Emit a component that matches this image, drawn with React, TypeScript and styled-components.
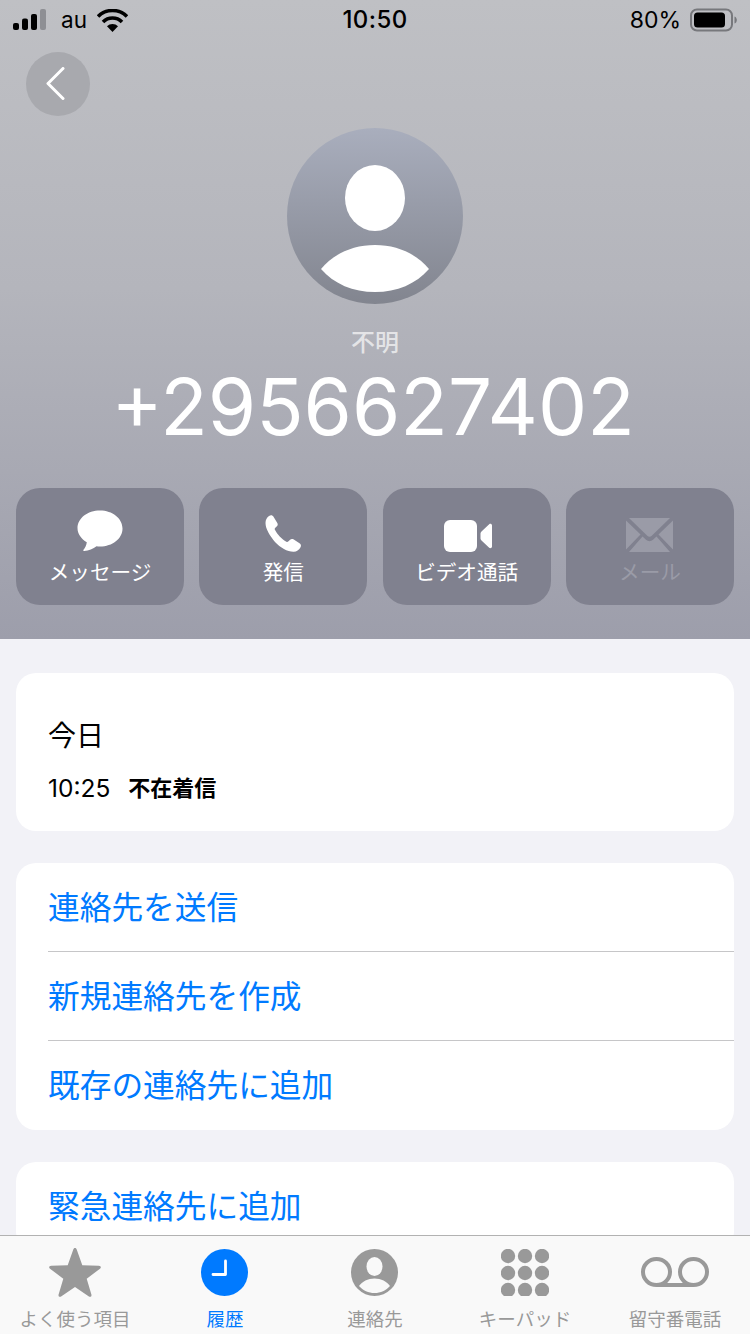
import styled, { createGlobalStyle } from 'styled-components';

const GlobalStyle = createGlobalStyle`
  html, body {
    margin: 0;
    padding: 0;
    background: #f2f2f7;
  }
  * {
    box-sizing: border-box;
  }
`;

const FONT = `Inter, "Noto Sans CJK JP", sans-serif`;

const Screen = styled.div`
  width: 750px;
  height: 1334px;
  display: flex;
  flex-direction: column;
  overflow: hidden;
  font-family: ${FONT};
  background: #f2f2f7;
`;

const Scroller = styled.div`
  flex: 1;
  min-height: 0;
  overflow: hidden;
`;

const Header = styled.header`
  height: 639px;
  padding: 0 16px;
  background: linear-gradient(180deg, #bfc0c4 0%, #b4b5bc 45%, #9d9eab 100%);
`;

const StatusBar = styled.div`
  display: grid;
  grid-template-columns: 1fr auto 1fr;
  align-items: center;
  height: 40px;
  margin: 0 -3px;
  color: #000;
`;

const StatusLeft = styled.div`
  display: flex;
  align-items: center;
`;

const Carrier = styled.span`
  margin: 0 10px 0 15px;
  font-size: 22.5px;
  line-height: 40px;
`;

const Clock = styled.span`
  font-size: 24px;
  font-weight: 500;
  line-height: 40px;
  letter-spacing: 0.4px;
`;

const StatusRight = styled.div`
  display: flex;
  align-items: center;
  justify-content: flex-end;
  gap: 9px;
`;

const Percent = styled.span`
  font-size: 23px;
  line-height: 40px;
`;

const BackRow = styled.div`
  padding: 12px 0 0 10px;
`;

const BackButton = styled.div`
  width: 64px;
  height: 64px;
  border-radius: 50%;
  background: #a8a9ae;
  display: flex;
  align-items: center;
  justify-content: center;
  padding: 0 6px 2px 0;
`;

const Identity = styled.div`
  display: flex;
  flex-direction: column;
  align-items: center;
  margin-top: 12px;
`;

const Avatar = styled.div`
  width: 176px;
  height: 176px;
  border-radius: 50%;
  overflow: hidden;
  background: linear-gradient(180deg, #a9aebd 0%, #82858f 100%);
`;

const Subtitle = styled.div`
  margin-top: 23px;
  font-size: 24px;
  font-weight: 500;
  line-height: 32px;
  color: rgba(255, 255, 255, 0.68);
`;

const PhoneNumber = styled.div`
  margin-top: 2px;
  padding-right: 4px;
  font-size: 78px;
  font-weight: 400;
  line-height: 92px;
  color: #fff;
  white-space: nowrap;
`;

const Actions = styled.div`
  display: grid;
  grid-template-columns: repeat(4, 168px);
  justify-content: space-between;
  margin-top: 35px;
`;

const Action = styled.div<{ $disabled?: boolean }>`
  height: 117px;
  border-radius: 24px;
  background: #80818f;
  display: flex;
  flex-direction: column;
  align-items: center;
  color: ${(p) => (p.$disabled ? '#9a9ba7' : '#fff')};
`;

const ActionIcon = styled.div`
  height: 74px;
  display: flex;
  align-items: flex-end;
  justify-content: center;
  padding-bottom: 10px;
`;

const ActionLabel = styled.span`
  font-size: 20.6px;
  line-height: 20px;
  margin-top: 1px;
  white-space: nowrap;
`;

const Card = styled.section`
  margin: 32px 16px 0;
  background: #fff;
  border-radius: 20px;
  overflow: hidden;
`;

const HistoryCard = styled(Card)`
  margin-top: 34px;
  height: 158px;
  padding: 45px 32px 0;
`;

const DayLabel = styled.div`
  font-size: 28px;
  line-height: 36px;
  color: #000;
`;

const CallLine = styled.div`
  display: flex;
  align-items: center;
  gap: 18px;
  margin-top: 18px;
  line-height: 32px;
  color: #000;
`;

const CallTime = styled.span`
  font-size: 24.5px;
`;

const CallKind = styled.span`
  font-size: 22px;
  font-weight: 700;
`;

const LinkRow = styled.div`
  height: 89px;
  margin-left: 32px;
  padding-bottom: 5px;
  display: flex;
  align-items: center;
  font-size: 31.7px;
  color: #007aff;
  border-bottom: 1px solid #c6c6c8;
  &:last-child {
    border-bottom: 0;
  }
`;

const TabBar = styled.nav`
  height: 99px;
  display: grid;
  grid-template-columns: repeat(5, 150px);
  background: #f9f9f9;
  border-top: 1px solid #b2b2b2;
`;

const Tab = styled.div<{ $active?: boolean }>`
  display: flex;
  flex-direction: column;
  align-items: center;
  color: ${(p) => (p.$active ? '#007aff' : '#999')};
`;

const TabIcon = styled.div`
  height: 64px;
  margin: 4px 1px 0 0;
  display: flex;
  align-items: center;
  justify-content: center;
`;

const TabLabel = styled.span`
  margin-top: 2px;
  font-size: 18.5px;
  line-height: 26px;
  white-space: nowrap;
`;

const SignalIcon = () => (
  <svg width="33" height="22" viewBox="0 0 33 22">
    <rect x="0" y="14" width="6" height="7" rx="2" fill="#000" />
    <rect x="9" y="9.500" width="6" height="11.500" rx="2" fill="#000" />
    <rect x="18" y="5" width="6" height="16" rx="2" fill="#000" />
    <rect x="27" y="0" width="6" height="21" rx="2" fill="#8e8f94" />
  </svg>
);

const WifiIcon = () => (
  <svg width="31" height="23" viewBox="0 0 31 23">
    <path d="M1 7.500a20.500 20.500 0 0 1 29 0" fill="none" stroke="#000" strokeWidth="3.600" />
    <path d="M6 13a13.400 13.400 0 0 1 19 0" fill="none" stroke="#000" strokeWidth="3.600" />
    <path d="M10 17.300a7.500 7.500 0 0 1 11 0L15.500 23z" fill="#000" />
  </svg>
);

const BatteryIcon = () => (
  <svg width="47" height="24" viewBox="0 0 47 24">
    <rect x="1" y="1.500" width="41" height="21" rx="6" fill="none" stroke="#77787c" strokeWidth="2" />
    <rect x="4" y="4.500" width="31" height="15" rx="3.500" fill="#000" />
    <path d="M44.500 8.500c1.600.5 2.300 2 2.300 3.500s-.7 3-2.300 3.500z" fill="#77787c" />
  </svg>
);

const BubbleIcon = () => (
  <svg width="46" height="42" viewBox="0 0 46 42">
    <path
      d="M23 .5C10.600.5.500 8.300.500 18c0 5.800 3.700 11 9.300 14.200-.4 2.900-1.700 5.700-3.300 7.600-.5.700 0 1.400.8 1.300 4.300-.4 9-2.400 12.200-4.900 1.100.2 2.300.3 3.500.3 12.400 0 22.500-7.800 22.500-18S35.400.5 23 .5z"
      fill="currentColor"
    />
  </svg>
);

const PhoneIcon = () => (
  <svg width="37" height="37" viewBox="0 0 37 37">
    <path
      d="M4 1C6-.2 7.500.3 8.500 1.800L12.300 8c.7 1.200.5 2.400-.4 3.300l-1.800 1.800c-.5.5-.5 1.100-.2 1.700 1.200 2.300 2.800 4.500 4.800 6.700 2.200 2.300 4.400 4 6.700 5.300.6.3 1.300.3 1.800-.2l1.900-1.900c.9-.9 2.200-1.100 3.300-.4l6.100 4c1.500 1 1.900 2.500.9 4.200-1.500 2.500-3.700 4.200-6.600 4.300-6.100.2-13.300-4-18.800-9.800C5 21 .5 14 .5 8 .5 5 1.800 2.500 4 1z"
      fill="currentColor"
    />
  </svg>
);

const VideoIcon = () => (
  <svg width="50" height="32" viewBox="-2 0 50 32">
    <rect x="0" y="0" width="33" height="32" rx="6" fill="currentColor" />
    <path
      d="M37.500 11.500l7.700-7.300c1.100-.9 2.800-.2 2.800 1.300v21c0 1.500-1.700 2.200-2.800 1.300l-7.700-7.300c-.6-.5-1-1.200-1-2v-5c0-.8.400-1.500 1-2z"
      fill="currentColor"
    />
  </svg>
);

const MailIcon = () => (
  <svg width="47" height="34" viewBox="0 0 47 34">
    <path d="M3 0h41L25.500 18c-1.100 1-2.900 1-4 0z" fill="currentColor" />
    <path d="M0 2.500v29L14.500 16.500z" fill="currentColor" />
    <path d="M47 2.500v29L32.500 16.500z" fill="currentColor" />
    <path d="M3 34h41L30.500 18.500l-3.500 3.300c-2 1.900-5 1.900-7 0l-3.500-3.300z" fill="currentColor" />
  </svg>
);

const StarIcon = () => (
  <svg width="52" height="49" viewBox="0 0 52 49">
    <path
      d="M26 0c.9 0 1.400.6 1.800 1.700l5.500 15.500 16.500.5c2 .1 2.800 1.700 1.200 3L37.700 30.700l4.700 15.800c.5 1.800-1 2.900-2.500 1.900L26 39l-13.900 9.400c-1.500 1-3-.1-2.500-1.900l4.700-15.800L1 20.700c-1.600-1.300-.8-2.900 1.200-3l16.500-.5 5.500-15.500C24.600.6 25.100 0 26 0z"
      fill="currentColor"
    />
  </svg>
);

const ClockIcon = () => (
  <svg width="47" height="47" viewBox="0 0 47 47">
    <circle cx="23.500" cy="23.500" r="23.500" fill="currentColor" />
    <path d="M24.500 12v13.500H12" fill="none" stroke="#fff" strokeWidth="2.800" strokeLinecap="round" strokeLinejoin="round" />
  </svg>
);

const ContactIcon = () => (
  <svg width="47" height="47" viewBox="0 0 47 47">
    <circle cx="23.500" cy="23.500" r="23.500" fill="currentColor" />
    <ellipse cx="23.500" cy="17.500" rx="8" ry="9.500" fill="#f9f9f9" />
    <path d="M8 37c3-4.500 9-7.500 15.500-7.500S36 32.500 39 37c-4 4.500-9.500 7-15.500 7S12 41.500 8 37z" fill="#f9f9f9" />
  </svg>
);

const KeypadIcon = () => (
  <svg width="48" height="47" viewBox="0 0 48 47" fill="currentColor">
    {[7, 24, 41].map((cy) =>
      [7, 24, 41].map((cx) => <circle key={`${cx}-${cy}`} cx={cx} cy={cy} r="7.200" />)
    )}
  </svg>
);

const VoicemailIcon = () => (
  <svg width="68" height="30" viewBox="0 0 68 30">
    <ellipse cx="15.500" cy="15" rx="13.500" ry="13" fill="none" stroke="currentColor" strokeWidth="4" />
    <ellipse cx="52.500" cy="15" rx="13.500" ry="13" fill="none" stroke="currentColor" strokeWidth="4" />
    <path d="M15.500 28h37" fill="none" stroke="currentColor" strokeWidth="4" />
  </svg>
);

const App = () => {
  return (
    <Screen>
      <GlobalStyle />
      <Scroller>
        <Header>
          <StatusBar>
            <StatusLeft>
              <SignalIcon />
              <Carrier>au</Carrier>
              <WifiIcon />
            </StatusLeft>
            <Clock>10:50</Clock>
            <StatusRight>
              <Percent>80%</Percent>
              <BatteryIcon />
            </StatusRight>
          </StatusBar>
          <BackRow>
            <BackButton>
              <svg width="20" height="33" viewBox="0 0 20 33">
                <path d="M18 1.500L3 16.500l15 15" fill="none" stroke="#fff" strokeWidth="3" strokeLinecap="round" strokeLinejoin="round" />
              </svg>
            </BackButton>
          </BackRow>
          <Identity>
            <Avatar>
              <svg width="176" height="176" viewBox="0 0 176 176">
                <ellipse cx="88" cy="70" rx="30" ry="33" fill="#fff" />
                <path d="M34 141c12-15 32-24 54-24s42 9 54 24c-13 15-32 23-54 23s-41-8-54-23z" fill="#fff" />
              </svg>
            </Avatar>
            <Subtitle>不明</Subtitle>
            <PhoneNumber>+2956627402</PhoneNumber>
          </Identity>
          <Actions>
            <Action>
              <ActionIcon><BubbleIcon /></ActionIcon>
              <ActionLabel>メッセージ</ActionLabel>
            </Action>
            <Action>
              <ActionIcon><PhoneIcon /></ActionIcon>
              <ActionLabel>発信</ActionLabel>
            </Action>
            <Action>
              <ActionIcon><VideoIcon /></ActionIcon>
              <ActionLabel>ビデオ通話</ActionLabel>
            </Action>
            <Action $disabled>
              <ActionIcon><MailIcon /></ActionIcon>
              <ActionLabel>メール</ActionLabel>
            </Action>
          </Actions>
        </Header>
        <HistoryCard>
          <DayLabel>今日</DayLabel>
          <CallLine>
            <CallTime>10:25</CallTime>
            <CallKind>不在着信</CallKind>
          </CallLine>
        </HistoryCard>
        <Card>
          <LinkRow>連絡先を送信</LinkRow>
          <LinkRow>新規連絡先を作成</LinkRow>
          <LinkRow>既存の連絡先に追加</LinkRow>
        </Card>
        <Card>
          <LinkRow>緊急連絡先に追加</LinkRow>
        </Card>
      </Scroller>
      <TabBar>
        <Tab>
          <TabIcon><StarIcon /></TabIcon>
          <TabLabel>よく使う項目</TabLabel>
        </Tab>
        <Tab $active>
          <TabIcon><ClockIcon /></TabIcon>
          <TabLabel>履歴</TabLabel>
        </Tab>
        <Tab>
          <TabIcon><ContactIcon /></TabIcon>
          <TabLabel>連絡先</TabLabel>
        </Tab>
        <Tab>
          <TabIcon><KeypadIcon /></TabIcon>
          <TabLabel>キーパッド</TabLabel>
        </Tab>
        <Tab>
          <TabIcon><VoicemailIcon /></TabIcon>
          <TabLabel>留守番電話</TabLabel>
        </Tab>
      </TabBar>
    </Screen>
  );
};

export default App;
